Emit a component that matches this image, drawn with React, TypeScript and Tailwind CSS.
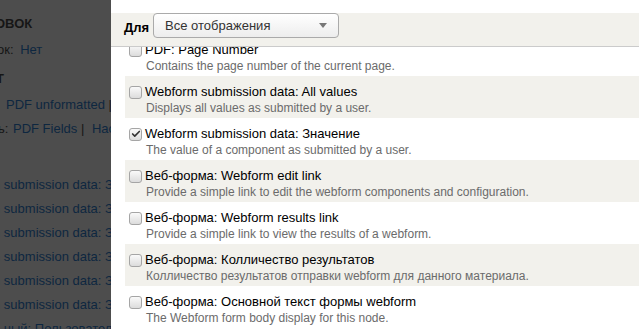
import { Check } from "lucide-react";

type Item = { label: string; desc: string; checked?: boolean };

const items: Item[] = [
  { label: "PDF: Page Number", desc: "Contains the page number of the current page." },
  { label: "Webform submission data: All values", desc: "Displays all values as submitted by a user." },
  { label: "Webform submission data: Значение", desc: "The value of a component as submitted by a user.", checked: true },
  { label: "Веб-форма: Webform edit link", desc: "Provide a simple link to edit the webform components and configuration." },
  { label: "Веб-форма: Webform results link", desc: "Provide a simple link to view the results of a webform." },
  { label: "Веб-форма: Колличество результатов", desc: "Колличество результатов отправки webform для данного материала." },
  { label: "Веб-форма: Основной текст формы webform", desc: "The Webform form body display for this node." },
];

const Checkbox = ({ checked }: { checked?: boolean }) => (
  <span className="w-[13px] h-[13px] shrink-0 rounded-[3px] border border-[#a5a5a5] bg-gradient-to-b from-[#fafafa] to-[#dcdcdc] flex items-center justify-center">
    {checked && <Check size={10} strokeWidth={4} className="text-[#333]" />}
  </span>
);

const Backdrop = () => (
  <div className="w-[111px] shrink-0 bg-[#4d4d4d] overflow-hidden text-[13px] whitespace-nowrap text-[#161616]">
    <div className="h-[14px]" />
    <div className="h-[16px] -ml-[5px] font-bold">ОВОК</div>
    <div className="h-[10px]" />
    <div className="h-[16px] -ml-[3px]">
      ок: <span className="text-[#0e2740] ml-[3px]">Нет</span>
    </div>
    <div className="h-[13px]" />
    <div className="h-[16px] -ml-[4px] font-bold">Т</div>
    <div className="h-[10px]" />
    <div className="h-[16px] pl-[6px]">
      <span className="text-[#0e2740]">PDF unformatted</span> |
    </div>
    <div className="h-[8px]" />
    <div className="h-[16px] -ml-[2px]">
      ь: <span className="text-[#0e2740] ml-[1px]">PDF Fields</span> |{" "}
      <span className="text-[#0e2740] ml-[4px]">Нас</span>
    </div>
    <div className="h-[40px]" />
    {[0, 1, 2, 3, 4, 5].map((i) => (
      <div key={i} className="h-[24px] -ml-[7px] text-[#0e2740]">
        n submission data: Зн
      </div>
    ))}
    <div className="h-[16px] -ml-[3px] text-[#0e2740]">ьный: Пользовательс</div>
  </div>
);

export default function App() {
  return (
    <div className="w-[639px] h-[329px] flex overflow-hidden font-['Liberation_Sans',Arial,sans-serif]">
      <Backdrop />
      <div className="flex-1 bg-white flex flex-col overflow-hidden">
        <div className="h-[13px] shrink-0" />
        <div className="h-[34px] shrink-0 bg-[#f2f1ec] border-b border-[#cbcbcb] flex items-start pl-[13px]">
          <span className="font-bold text-[13px] text-black mt-[5px] mr-[4px]">Для</span>
          <div className="w-[186px] h-[25px] rounded-[4px] border border-[#aaa] bg-gradient-to-b from-white to-[#ededed] flex items-center justify-between pl-[11px] pr-[11px]">
            <span className="text-[13px] text-[#333]">Все отображения</span>
            <span className="w-0 h-0 border-l-[4px] border-r-[4px] border-t-[5px] border-l-transparent border-r-transparent border-t-[#777]" />
          </div>
        </div>
        <div className="flex-1 overflow-hidden pl-[14px]">
          <div className="-mt-[13px]">
            {items.map((it, i) => (
              <div
                key={it.label}
                className={`h-[42px] pl-[4px] pt-[8px] ${i % 2 === 1 ? "bg-[#f2f1ec]" : "bg-white"}`}
              >
                <div className="flex items-center gap-[3px] h-[16px]">
                  <Checkbox checked={it.checked} />
                  <span className="text-[13px] text-black whitespace-nowrap">{it.label}</span>
                </div>
                <div className="pl-[17px] mt-[1px] text-[12px] leading-[15px] text-[#6b6b6b] whitespace-nowrap">
                  {it.desc}
                </div>
              </div>
            ))}
          </div>
        </div>
      </div>
    </div>
  );
}
